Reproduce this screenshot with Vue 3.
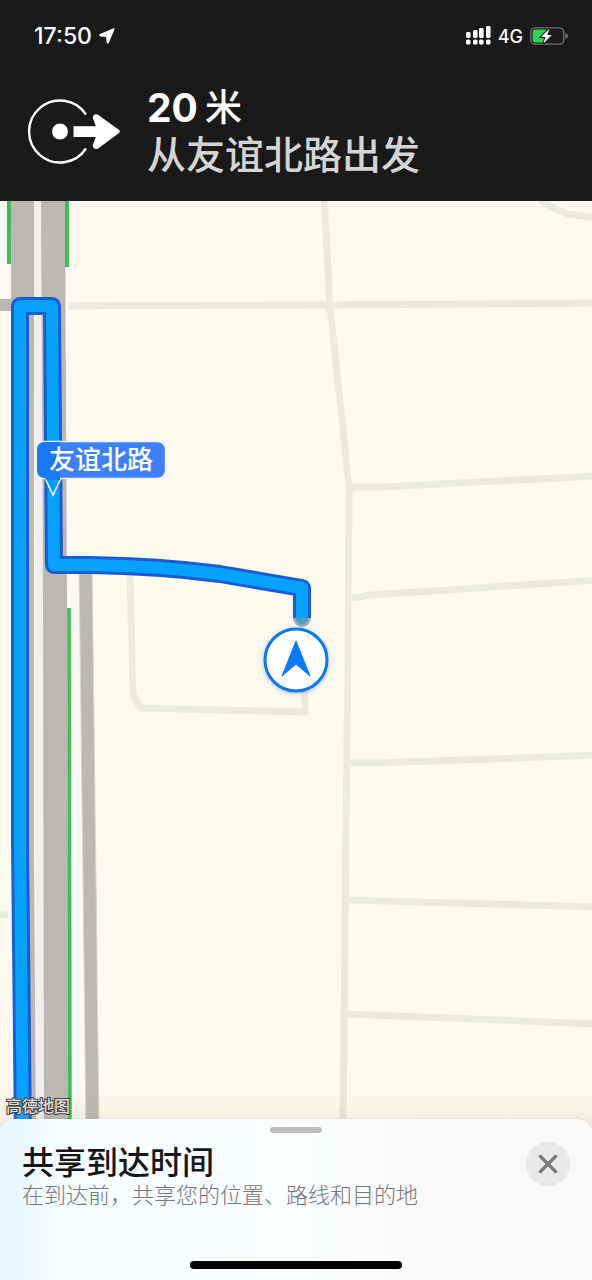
<script setup>
const minorRoads = [
  'M324 198 L330 306 L349 487 L348 650 L343 1130',
  'M68 306 L330 305 L592 303',
  'M540 200 Q552 208 568 214 L596 218',
  'M349 487 L380 487 L596 476',
  'M352 598 L372 595 L596 580',
  'M350 763 L380 763 L596 755',
  'M348 900 L596 907',
  'M346 1014 L596 1024',
  'M130 570 L133 694 L140 708 L305 712 L305 690',
  'M0 915 H8',
]
const route = 'M23 1140 L20 840 L20 306 L52 306 L54 565 L90 565 Q160 566 220 574 L302 588 L302 618'
const signal = [
  { x: 0, y: 6 }, { x: 7, y: 4 }, { x: 13, y: 2 }, { x: 20, y: 0 },
]
</script>

<template>
  <main class="screen">
    <header class="top">
      <div class="status">
        <div class="clock">
          <span>17:50</span>
          <svg width="16" height="16" viewBox="0 0 16 16" aria-hidden="true">
            <path d="M15 .8 L9.3 14.6 Q8.7 15.4 8.2 14.5 L7.6 8.4 L1.4 7.8 Q.4 7.2 1.2 6.5 Z" fill="#fff" stroke="#fff" stroke-width="1.2" stroke-linejoin="round" />
          </svg>
        </div>
        <div class="radio">
          <svg width="25" height="20" viewBox="0 0 25 20" fill="#fff" aria-hidden="true">
            <template v-for="b in signal" :key="b.x">
              <rect :x="b.x" :y="b.y" width="4.6" :height="12 - b.y" rx="1.4" />
              <rect :x="b.x" y="13.4" width="4.6" height="5.2" rx="1.7" />
            </template>
          </svg>
          <span class="net">4G</span>
          <svg width="38" height="18" viewBox="0 0 38 18" aria-hidden="true">
            <rect x=".8" y=".8" width="33" height="16.4" rx="4.5" fill="none" stroke="#77777a" stroke-width="1.3" />
            <path d="M35.5 6 Q38 7 38 9 T35.5 12 Z" fill="#77777a" />
            <rect x="2.6" y="2.6" width="14.5" height="12.8" rx="2.4" fill="#30d158" />
            <path d="M19.5 1.5 L11 10 H15.4 L13.4 16.5 L21.8 7.9 H17.4 Z" fill="#fff" stroke="#1a1a1a" stroke-width="2" paint-order="stroke" />
          </svg>
        </div>
      </div>
      <section class="step">
        <svg class="depart" width="94" height="66" viewBox="0 0 94 66" aria-hidden="true">
          <path d="M59 15.5 A31 31 0 1 0 59 49.5" fill="none" stroke="#fff" stroke-width="2.4" />
          <circle cx="33" cy="32.5" r="8" fill="#fff" />
          <path d="M46.5 27.2 H72 V38 H46.5 Z" fill="#fff" />
          <path d="M67.5 18.5 Q68 16.5 70 17.2 L91 32.5 L70 48 Q68 48.5 67.5 46.5 L71 37 V28 Z" fill="#fff" stroke="#fff" stroke-width="3.6" stroke-linejoin="round" />
        </svg>
        <div class="step-text">
          <h1><span class="num">20</span><span class="unit">米</span></h1>
          <p>从友谊北路出发</p>
        </div>
      </section>
    </header>

    <section class="map" aria-label="地图">
      <svg class="canvas" viewBox="0 201 592 930" preserveAspectRatio="xMinYMin slice">
        <defs>
          <linearGradient id="fade" x1="0" y1="0" x2="0" y2="1">
            <stop offset="0" stop-color="#a09088" stop-opacity="0" />
            <stop offset="1" stop-color="#a09088" stop-opacity=".16" />
          </linearGradient>
        </defs>
        <rect y="201" width="592" height="930" fill="#fcfaee" />
        <g fill="none" stroke="#eaeadf" stroke-width="7" stroke-linejoin="round">
          <path v-for="d in minorRoads" :key="d" :d="d" />
        </g>
        <path d="M8 201 H68 L76 1131 H8 Z" fill="#faf9f5" />
        <path d="M0 305 H12" stroke="#b9b7b3" stroke-width="12" />
        <path d="M34 201 H42 L44 1131 H36 Z" fill="#f0efeb" />
        <path d="M11 201 H34 L34 850 L36 1131 H16 L12 850 Z" fill="#bbb8b2" />
        <path d="M41 201 H65 L67 600 L69 1131 H44 L43 600 Z" fill="#bbb8b2" />
        <path d="M79 565 H92 L96 880 L99 1131 H86 L83 880 Z" fill="#bbb8b2" stroke="#d7d5d0" stroke-width="1" />
        <path d="M9 201 V264 M67 201 V267" stroke="#3dbb5d" stroke-width="4" />
        <path d="M69 608 L70 1131" stroke="#3dc05b" stroke-width="3.6" />
        <circle cx="302" cy="618" r="9" fill="#91adb4" />
        <circle cx="302" cy="618" r="6" fill="#5199c8" />
        <g fill="none" stroke-linejoin="round">
          <path :d="route" stroke="#1b5cd3" stroke-width="18" />
          <path :d="route" stroke="#05a3ff" stroke-width="12" />
        </g>
        <path d="M45 478 L53 495 L61 478" fill="#059cff" stroke="#e8f4ff" stroke-width="1.6" />
        <rect x="36.5" y="441.5" width="129" height="37" rx="8" fill="#3e80fc" stroke="#f2f6ff" stroke-width="1.4" />
        <path d="M45 442 H60 V480 H46 L45 478 Q37 478 37 470 V450 Q37 442 45 442 Z" fill="#1a78fb" />
        <text class="road-name" x="49" y="469">友谊北路</text>
        <circle class="puck" cx="296" cy="660" r="31" fill="#fff" stroke="#0b79f5" stroke-width="3" />
        <path d="M296 641 L310 676 L296 664 L282 676 Z" fill="#077cfc" stroke="#077cfc" stroke-linejoin="round" />
        <rect y="1090" width="592" height="41" fill="url(#fade)" />
        <text class="brand" x="6" y="1112">高德地图</text>
      </svg>
    </section>

    <section class="sheet">
      <div class="grabber"></div>
      <div class="share">
        <div class="share-text">
          <h2>共享到达时间</h2>
          <p>在到达前，共享您的位置、路线和目的地</p>
        </div>
        <button class="close" type="button" aria-label="关闭">
          <svg width="20" height="20" viewBox="0 0 20 20" aria-hidden="true">
            <path d="M2.5 2.5 L17.5 17.5 M17.5 2.5 L2.5 17.5" stroke="#7c7c7f" stroke-width="3.4" stroke-linecap="round" />
          </svg>
        </button>
      </div>
      <div class="home"></div>
    </section>
  </main>
</template>

<style>
body { margin: 0; }
</style>

<style scoped>
.screen {
  display: flex;
  flex-direction: column;
  min-height: 100vh;
  font-family: Inter, "Noto Sans CJK SC", sans-serif;
}
h1, h2, p { margin: 0; }
svg { display: block; }
.top {
  background: #1a1a1a;
  color: #fff;
  padding-bottom: 21px;
}
.status {
  display: flex;
  justify-content: space-between;
  align-items: center;
  height: 72px;
  padding: 0 24px 0 34px;
}
.clock, .radio {
  display: flex;
  align-items: center;
  gap: 7px;
}
.clock {
  font-size: 23px;
  font-weight: 500;
}
.net {
  font-size: 18px;
  font-weight: 500;
}
.step {
  display: flex;
  align-items: center;
  gap: 26px;
  padding: 12px 27px 0;
}
.step-text { min-width: 0; }
h1 {
  display: flex;
  align-items: center;
  gap: 7px;
  font-size: 37px;
  line-height: 48px;
  font-weight: 700;
}
.num { font-size: 39px; }
.unit { font-weight: 500; }
.step p {
  font-size: 39px;
  line-height: 46px;
  padding-bottom: 2px;
  font-weight: 500;
  color: #d4d4d4;
}
.map {
  position: relative;
  flex: 1;
  min-height: 320px;
  overflow: hidden;
  background: #fcfaee;
}
.canvas {
  position: absolute;
  inset: 0;
  width: 100%;
  height: 100%;
}
.road-name {
  font-size: 26px;
  font-weight: 500;
  fill: #fff;
}
.brand {
  font-size: 16px;
  font-weight: 500;
  fill: #ddd;
  stroke: #444;
  stroke-width: 2px;
  paint-order: stroke;
}
.puck { filter: drop-shadow(0 1px 2px rgba(50, 80, 180, 0.4)); }
.sheet {
  position: relative;
  display: flex;
  flex-direction: column;
  align-items: center;
  margin-top: -12px;
  padding: 8px 22px 11px;
  border-radius: 14px 14px 0 0;
  background: linear-gradient(90deg, #e8f6ff 0, #f6fcff 60px, #fafeff 300px, #faf9f8 420px);
  box-shadow: 0 0 2px rgba(0, 0, 0, 0.15);
}
.grabber {
  width: 52px;
  height: 6px;
  border-radius: 3px;
  background: #bfbfc1;
}
.share {
  display: flex;
  align-self: stretch;
  justify-content: space-between;
  align-items: flex-start;
  padding-top: 9px;
}
h2 {
  padding-top: 2px;
  font-size: 32px;
  line-height: 38px;
  font-weight: 500;
  color: #161616;
}
.share p {
  font-size: 22px;
  line-height: 26px;
  font-weight: 300;
  color: #77787a;
}
.close {
  display: grid;
  place-items: center;
  flex: none;
  width: 44px;
  height: 44px;
  padding: 0;
  border: 0;
  border-radius: 50%;
  background: #e9e8e9;
}
.home {
  width: 212px;
  height: 8px;
  margin-top: 53px;
  border-radius: 4px;
  background: #000;
}
</style>
